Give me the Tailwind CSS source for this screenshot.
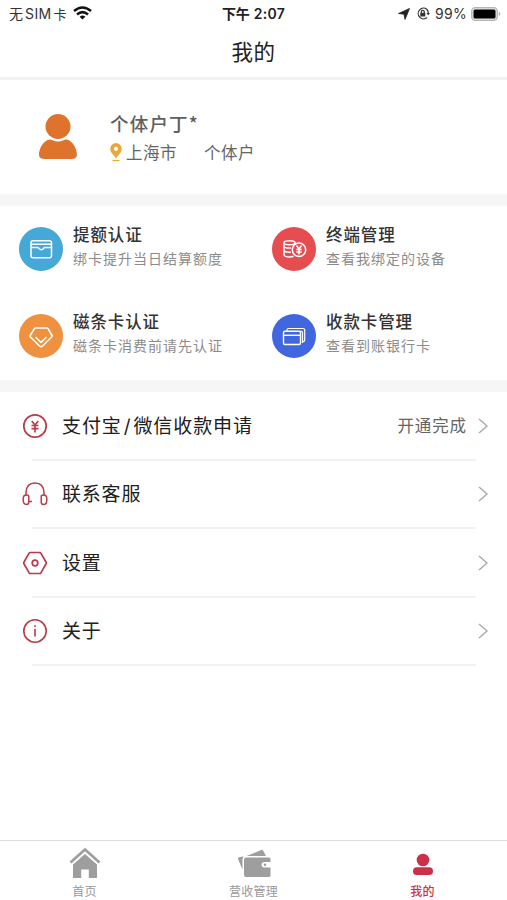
<!DOCTYPE html>
<html lang="zh-CN">
<head>
<meta charset="utf-8">
<title>我的</title>
<script src="https://cdn.jsdelivr.net/npm/@tailwindcss/browser@4"></script>
</head>
<body class="bg-white">
<div class="w-[507px] h-[900px] flex flex-col overflow-hidden font-['Inter','Noto_Sans_CJK_SC',sans-serif] whitespace-nowrap text-[#333]">
  <header class="h-[80px] shrink-0 border-b-[3px] border-[#f2f2f2]">
    <div class="h-[27px] grid grid-cols-3 items-center text-[14px] leading-[20px]">
      <div class="flex items-center pl-[9px] text-[#333]">
        <span>无</span><span class="ml-[2px] tracking-[0.4px]">SIM</span><span class="ml-[2px] text-[13px]">卡</span>
        <svg class="ml-[6px] -mt-[2px]" width="19" height="14" viewBox="0 0 19 14" fill="none" stroke="#111" stroke-width="2.600"><path d="M1 5Q9.500-2 18 5M4 8.500Q9.500 3.800 15 8.500"/><path d="M9.500 13.500L6.600 10.700Q9.500 8.400 12.400 10.700Z" fill="#111" stroke="none"/></svg>
      </div>
      <div class="text-center font-semibold text-[#222] tracking-[0.3px]"><span class="font-bold tracking-normal">下午</span> 2:07</div>
      <div class="flex items-center justify-end pr-[6px] text-[#333]">
        <svg width="12" height="12" viewBox="0 0 12 12"><path d="M11.500 0.500L7 11.500L6 6.200L0.500 5.500Z" fill="#222" stroke="#222" stroke-width="0.800" stroke-linejoin="round"/></svg>
        <svg class="ml-[6px]" width="14" height="13" viewBox="0 0 14 13" fill="none" stroke="#333" stroke-width="1.200"><path d="M11 2.500A5.300 5.300 0 1 0 11 10.500M11 2.500Q12.300 4 12.300 6"/><path d="M5.300 6V4.800a1.500 1.500 0 0 1 3 0V6"/><path d="M4.300 5.800h5v3.700h-5z" fill="#333" stroke="none"/><path d="M10.300 6h3.700l-1.800 2.300z" fill="#333" stroke="none"/></svg>
        <span class="ml-[5px] tracking-[0.300px]">99%</span>
        <svg class="ml-[4px]" width="30" height="14" viewBox="0 0 30 14"><rect x="0.700" y="0.700" width="25.600" height="12.600" rx="3.500" fill="#e4e4e4" stroke="#b5b5b5" stroke-width="1.300"/><rect x="2.500" y="2.500" width="22" height="9" rx="1.500" fill="#000"/><path d="M27.800 4.800q3 2.200 0 4.400z" fill="#aaa"/></svg>
      </div>
    </div>
    <h1 class="h-[50px] text-center text-[21.500px] leading-[50px] tracking-[0.400px] text-[#222]">我的</h1>
  </header>

  <section class="h-[114px] shrink-0 flex pl-[38px]">
    <svg class="mt-[33px]" width="40" height="48" viewBox="0 0 40 48" fill="#df732c"><circle cx="20" cy="13.500" r="12.500"/><path d="M9 27.200Q12.500 25.800 14.500 27.200Q20 30 25.500 27.200Q28 25.800 31 27.200Q37.500 31.500 38.800 40V42.500Q38.500 46 33 46H7Q1.500 46 1 42.500V40Q2.200 31.500 9 27.200Z"/></svg>
    <div class="ml-[32px] pt-[28px]">
      <div class="text-[18.500px] leading-[30px] tracking-[1.200px] font-medium text-[#606060]">个体户丁<span class="font-['Noto_Sans_CJK_SC']">*</span></div>
      <div class="flex items-center h-[28px] text-[16.500px] tracking-[0.500px] text-[#666]">
        <svg class="-mt-[2px]" width="12" height="19" viewBox="0 0 12 19"><path d="M6 0a5.800 5.800 0 0 1 5.800 5.800C11.800 10 8 12 6 15.500C4 12 .2 10 .2 5.800A5.800 5.800 0 0 1 6 0Z" fill="#e9a93a"/><circle cx="6" cy="5.800" r="2.100" fill="#fff"/><path d="M2.500 17.500h7" stroke="#e9a93a" stroke-width="1.300"/></svg>
        <span class="ml-[4px] pt-[1px]">上海市</span><span class="ml-[27px] pt-[1px]">个体户</span>
      </div>
    </div>
  </section>

  <section class="h-[198px] shrink-0 border-y-[12px] border-[#f6f6f6] grid grid-cols-[253px_254px] grid-rows-[87px_87px]">
    <div class="flex pl-[19px] pt-[21px]">
      <svg class="shrink-0" width="44" height="44" viewBox="0 0 44 44" fill="none" stroke="#fff" stroke-width="1.500"><circle cx="22" cy="22" r="22" fill="#46a8d6" stroke="none"/><rect x="12" y="13.700" width="20.500" height="17" rx="2"/><path d="M12 17.300H32.500M12 20.500H18.500Q19.500 20.500 20 21.500Q22.300 24 24.600 21.500Q25 20.500 26 20.500H32.500"/></svg>
      <div class="ml-[10px] -mt-[5px]"><div class="text-[16.500px] leading-[27px] tracking-[0.900px] font-medium">提额认证</div><div class="text-[14px] leading-[20px] tracking-[1px] text-[#8c8c8c]">绑卡提升当日结算额度</div></div>
    </div>
    <div class="flex pl-[19px] pt-[21px]">
      <svg class="shrink-0" width="44" height="44" viewBox="0 0 44 44" fill="none" stroke="#fff" stroke-width="1.500"><circle cx="22" cy="22" r="22" fill="#e54d50" stroke="none"/><ellipse cx="17.500" cy="15.700" rx="5.500" ry="2"/><path d="M12 15.700V28Q13 30 17.500 30Q20 30 21.500 29.300M12 19.500Q13 21.500 19 21M12 23.700Q13 25.500 19 25.200M23 15.500V17"/><circle cx="27" cy="22.700" r="6.700"/><path d="M24.500 18.500l2.500 3.500 2.500-3.500M27 22v5.500M24.300 22.500h5.400M24.300 24.900h5.400"/></svg>
      <div class="ml-[10px] -mt-[5px]"><div class="text-[16.500px] leading-[27px] tracking-[0.900px] font-medium">终端管理</div><div class="text-[14px] leading-[20px] tracking-[1px] text-[#8c8c8c]">查看我绑定的设备</div></div>
    </div>
    <div class="flex pl-[19px] pt-[21px]">
      <svg class="shrink-0" width="44" height="44" viewBox="0 0 44 44" fill="none" stroke="#fff" stroke-width="1.600" stroke-linejoin="round" stroke-linecap="round"><circle cx="22" cy="22" r="22" fill="#ee923f" stroke="none"/><path d="M16.500 14H28Q28.500 14 29 14.600L33 21.500Q33.300 22 32.800 22.700L23.500 32Q22 33.300 20.500 32L11.200 22.700Q10.800 22 11.200 21.500L15.500 14.600Q16 14 16.500 14Z"/><path d="M17 23.500L22 28.500L27 23.500"/></svg>
      <div class="ml-[10px] -mt-[5px]"><div class="text-[16.500px] leading-[27px] tracking-[0.900px] font-medium">磁条卡认证</div><div class="text-[14px] leading-[20px] tracking-[1px] text-[#8c8c8c]">磁条卡消费前请先认证</div></div>
    </div>
    <div class="flex pl-[19px] pt-[21px]">
      <svg class="shrink-0" width="44" height="44" viewBox="0 0 44 44" fill="none" stroke="#fff" stroke-width="1.400"><circle cx="22" cy="22" r="22" fill="#4067df" stroke="none"/><rect x="11.500" y="17.300" width="17" height="13.200" rx="1.500"/><path d="M11.500 21.300H28.500"/><path d="M15 17V16Q15 14.500 16.500 14.500H31Q32.700 14.500 32.700 16V26Q32.700 27.700 31 27.700M28 17.300H29.500Q30.500 17.300 30.500 18.500V29" stroke-width="1.200"/></svg>
      <div class="ml-[10px] -mt-[5px]"><div class="text-[16.500px] leading-[27px] tracking-[0.900px] font-medium">收款卡管理</div><div class="text-[14px] leading-[20px] tracking-[1px] text-[#8c8c8c]">查看到账银行卡</div></div>
    </div>
  </section>

  <main class="flex-1 text-[19px] tracking-[0.800px] text-[#202020]">
    <div class="h-[67px] flex items-center pl-[22px] pr-[18px]">
      <svg width="26" height="26" viewBox="0 0 26 26" fill="none" stroke="#b83c49" stroke-width="1.700"><circle cx="13" cy="13" r="11.200"/><path d="M9.700 8L13 12l3.300-4M13 12v7.500M9.500 12.500h7M9.500 15.700h7"/></svg>
      <span class="ml-[14px] pt-[3px] tracking-[0.900px]">支付宝<span class="mx-[2px]">/</span>微信收款申请</span><span class="ml-auto pt-[2px] text-[16.500px] tracking-[0.900px] text-[#666]">开通完成</span>
      <svg class="ml-[11px]" width="11" height="16" viewBox="0 0 11 16" fill="none" stroke="#aaa" stroke-width="1.400"><path d="M1 1L9 8L1 15"/></svg>
    </div>
    <div class="h-[2px] ml-[32px] mr-[31px] bg-[#f2f2f2]"></div>
    <div class="h-[66px] flex items-center pl-[22px] pr-[18px]">
      <svg width="26" height="26" viewBox="0 0 26 26" fill="none" stroke="#b83c49" stroke-width="1.500"><path d="M4 14.500V11.500Q4.500 2 13 2Q21.500 2 22 11.500V14.500"/><path d="M6.800 15.500V21Q6.800 23.500 4.500 23.500Q1.200 23.500 1.200 19V17.500Q1.200 14 4.500 14Q6.800 14 6.800 15.500ZM19.200 15.500V21Q19.200 23.500 21.500 23.500Q24.800 23.500 24.800 19V17.500Q24.800 14 21.500 14Q19.200 14 19.200 15.500Z"/><path d="M6.800 20.500H10"/></svg>
      <span class="ml-[14px] pt-[3px]">联系客服</span>
      <svg class="ml-auto" width="11" height="16" viewBox="0 0 11 16" fill="none" stroke="#aaa" stroke-width="1.400"><path d="M1 1L9 8L1 15"/></svg>
    </div>
    <div class="h-[2px] ml-[32px] mr-[31px] bg-[#f2f2f2]"></div>
    <div class="h-[67px] flex items-center pl-[22px] pr-[18px]">
      <svg width="26" height="26" viewBox="0 0 26 26" fill="none" stroke="#b83c49" stroke-width="1.700" stroke-linejoin="round"><path d="M8.500 2.500H17.500Q18.500 2.500 19 3.300L24 12Q24.500 13 24 14L19 22.700Q18.500 23.500 17.500 23.500H8.500Q7.500 23.500 7 22.700L2 14Q1.500 13 2 12L7 3.300Q7.500 2.500 8.500 2.500Z"/><circle cx="13" cy="13" r="2.800"/></svg>
      <span class="ml-[14px] pt-[3px]">设置</span>
      <svg class="ml-auto" width="11" height="16" viewBox="0 0 11 16" fill="none" stroke="#aaa" stroke-width="1.400"><path d="M1 1L9 8L1 15"/></svg>
    </div>
    <div class="h-[2px] ml-[32px] mr-[31px] bg-[#f2f2f2]"></div>
    <div class="h-[66px] flex items-center pl-[22px] pr-[18px]">
      <svg width="26" height="26" viewBox="0 0 26 26" fill="none" stroke="#b83c49" stroke-width="1.600"><circle cx="13" cy="13" r="11.200"/><path d="M13 10.700V18.500M13 7.300V9"/></svg>
      <span class="ml-[14px] pt-[3px]">关于</span>
      <svg class="ml-auto" width="11" height="16" viewBox="0 0 11 16" fill="none" stroke="#aaa" stroke-width="1.400"><path d="M1 1L9 8L1 15"/></svg>
    </div>
    <div class="h-[2px] ml-[32px] mr-[31px] bg-[#f2f2f2]"></div>
  </main>

  <nav class="h-[60px] shrink-0 border-t border-[#ddd] grid grid-cols-3 text-[12px] tracking-[0.300px] text-[#999]">
    <div class="flex flex-col items-center pt-[5px]">
      <svg width="32" height="32" viewBox="0 0 32 32" fill="#9e9e9e"><path d="M16 8L28 18.500V32H19.800V23.500H12.200V32H4V18.500Z"/><path d="M1.500 16.500L16 3.500L30.500 16.500" fill="none" stroke="#9e9e9e" stroke-width="2.700"/></svg>
      <span class="mt-[6px] leading-[16px]">首页</span>
    </div>
    <div class="flex flex-col items-center pt-[5px]">
      <svg width="34" height="32" viewBox="0 0 34 32" fill="#9e9e9e"><path d="M9.500 10L25.500 3.500L29 10Z"/><path d="M1 13Q1 11.500 2.500 11L7 10.500Q5.500 11.500 5.500 13.500V23.500Z"/><path d="M9 11.500H32Q33.500 11.500 33.500 13V16H28Q24.500 16 24.500 18.700Q24.500 21.500 28 21.500H33.500V29.500Q33.500 31 32 31H9Q7 31 7 29V13.500Q7 11.500 9 11.500Z"/><circle cx="28" cy="18.700" r="1.300"/></svg>
      <span class="mt-[6px] leading-[16px]">营收管理</span>
    </div>
    <div class="flex flex-col items-center pt-[5px] text-[#c9304b]">
      <svg width="22" height="32" viewBox="0 0 22 32" fill="#cb3049"><circle cx="11" cy="14" r="6.300"/><rect x="1" y="21.300" width="20" height="7.700" rx="3.850"/></svg>
      <span class="mt-[6px] leading-[16px] font-medium">我的</span>
    </div>
  </nav>
</div>
</body>
</html>
